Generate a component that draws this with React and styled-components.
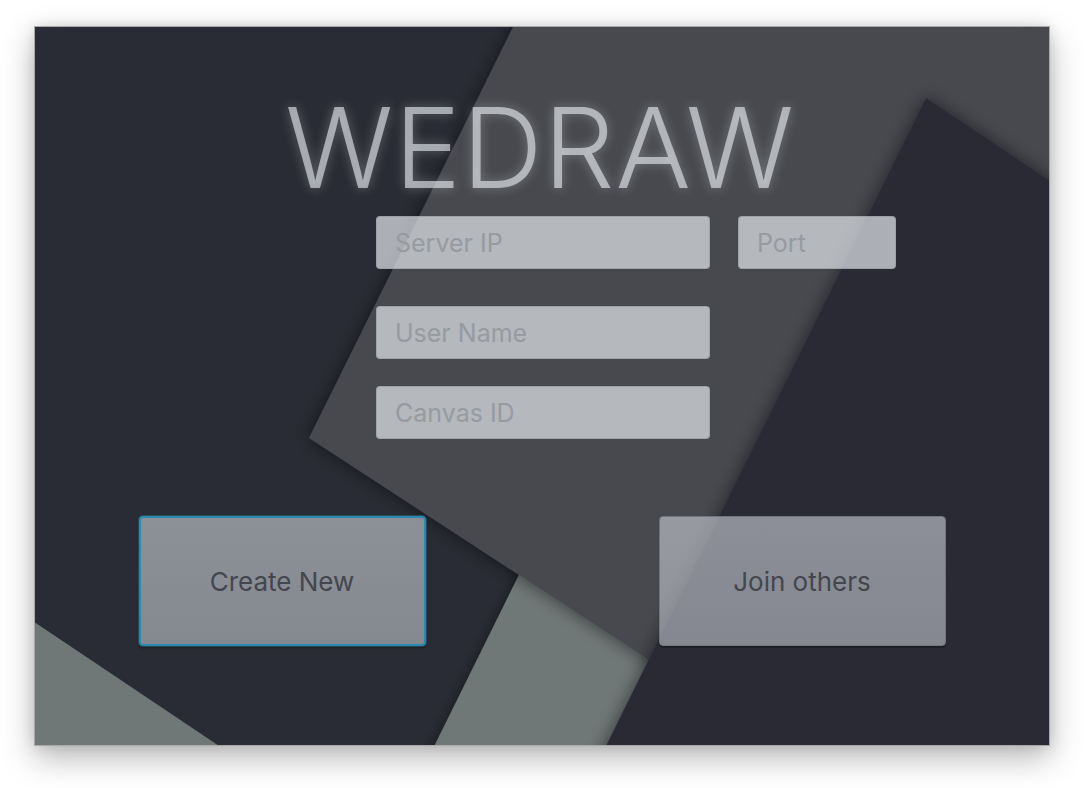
import React from "react";
import styled, { createGlobalStyle } from "styled-components";

const Global = createGlobalStyle`
  html, body { margin: 0; padding: 0; background: #ffffff; }
  body { font-family: Inter, "Liberation Sans", sans-serif; }
  * { box-sizing: border-box; }
`;

const Page = styled.div`
  width: 1084px;
  height: 788px;
  padding-top: 26px;
`;

const Window = styled.div`
  position: relative;
  width: 1016px;
  height: 720px;
  margin: 0 auto;
  overflow: hidden;
  background: #292c34;
  border: 1px solid #a9a9a9;
  box-shadow: 0 12px 30px rgba(0, 0, 0, 0.28), 0 0 12px rgba(0, 0, 0, 0.12);
`;

const Backdrop = styled.svg`
  position: absolute;
  inset: 0;
  width: 100%;
  height: 100%;
  z-index: 0;
`;

const Content = styled.div`
  position: relative;
  z-index: 1;
  display: flex;
  flex-direction: column;
  align-items: center;
  height: 100%;
`;

const Title = styled.h1`
  margin: 64px 0 0 0;
  font-family: Inter, "Liberation Sans", sans-serif;
  font-weight: 300;
  font-size: 112px;
  line-height: 1;
  letter-spacing: 1px;
  color: rgba(235, 240, 245, 0.6);
  text-shadow: 0 0 12px rgba(255, 255, 255, 0.28);
  transform: translateX(-2px);
`;

const Form = styled.div`
  align-self: flex-start;
  margin-left: 341px;
  display: grid;
  grid-template-columns: 334px 158px;
  column-gap: 28px;
`;

const Field = styled.input`
  grid-column: ${(p) => p.$col || "1"};
  margin-top: ${(p) => p.$mt || 0}px;
  height: 53px;
  width: 100%;
  padding: 0 18px;
  border: 1px solid rgba(150, 155, 160, 0.7);
  border-radius: 4px;
  background: rgba(228, 232, 236, 0.7);
  font-family: Inter, "Liberation Sans", sans-serif;
  font-size: 25px;
  color: #55585e;
  outline: none;
  &::placeholder {
    color: #979ba0;
  }
`;

const Actions = styled.div`
  display: flex;
  gap: 233px;
  margin-top: 77px;
`;

const Button = styled.button`
  width: 287px;
  height: 130px;
  border-radius: 4px;
  border: ${(p) => (p.$focused ? "2px solid #2b89ae" : "1px solid #73767c")};
  box-shadow: ${(p) =>
    p.$focused
      ? "0 0 0 1px rgba(43, 137, 174, 0.35), 0 2px 3px rgba(0,0,0,0.3)"
      : "0 2px 1px rgba(0,0,0,0.25)"};
  background: linear-gradient(rgba(192, 196, 203, 0.66), rgba(180, 184, 191, 0.66));
  font-family: Inter, "Liberation Sans", sans-serif;
  font-size: 26px;
  color: #43464c;
  cursor: pointer;
`;

export default function App() {
  return (
    <>
      <Global />
      <Page>
        <Window>
          <Backdrop viewBox="0 0 1014 718" preserveAspectRatio="none">
            <defs>
              <filter id="sh" x="-20%" y="-20%" width="140%" height="140%">
                <feDropShadow dx="0" dy="0" stdDeviation="9" floodColor="#000" floodOpacity="0.55" />
              </filter>
              <filter id="sh2" x="-20%" y="-20%" width="140%" height="140%">
                <feDropShadow dx="0" dy="0" stdDeviation="7" floodColor="#000" floodOpacity="0.45" />
              </filter>
            </defs>
            <polygon points="-20,582 202,731 -20,731" fill="#6f7777" />
            <polygon points="379,760 559,396 780,396 600,760" fill="#6f7777" filter="url(#sh2)" />
            <polygon points="493,-30 1100,-30 1100,950 274,411" fill="#464a4f" filter="url(#sh)" />
            <polygon points="891,71 1120,224 1120,800 531,800" fill="#292c34" filter="url(#sh)" />
          </Backdrop>
          <Content>
            <Title>WEDRAW</Title>
            <Form>
              <Field $mt={13} placeholder="Server IP" />
              <Field $mt={13} $col="2" placeholder="Port" />
              <Field $mt={37} placeholder="User Name" />
              <Field $mt={27} placeholder="Canvas ID" />
            </Form>
            <Actions>
              <Button $focused>Create New</Button>
              <Button>Join others</Button>
            </Actions>
          </Content>
        </Window>
      </Page>
    </>
  );
}
